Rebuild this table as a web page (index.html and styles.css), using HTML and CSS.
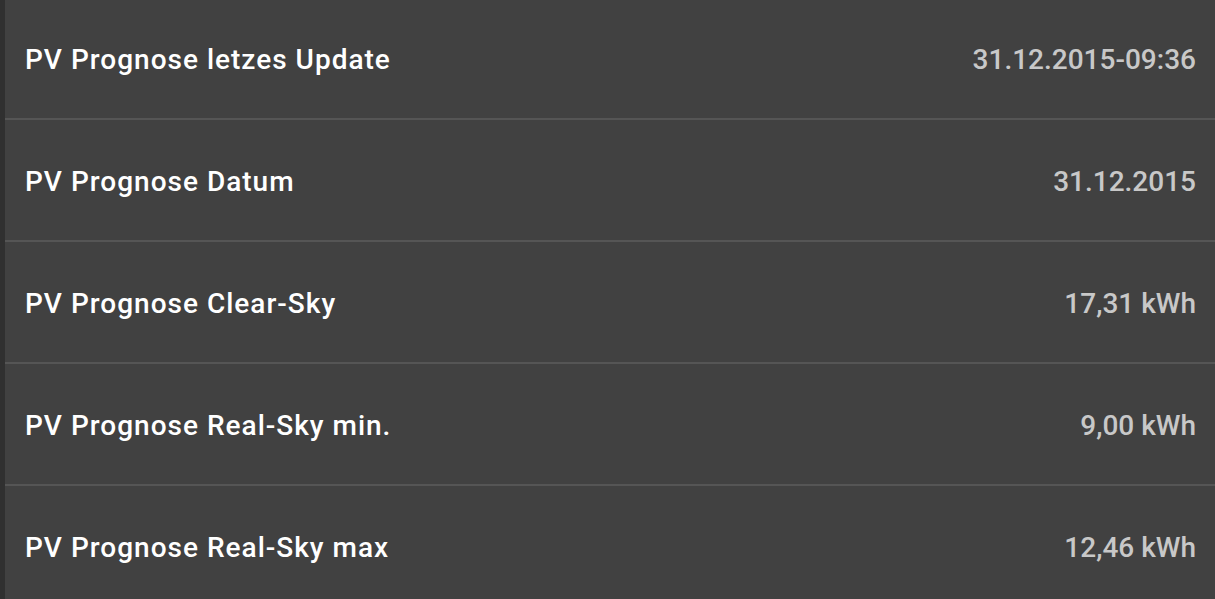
FILE: index.html
```html
<!DOCTYPE html>
<html>
<head>
<meta charset="utf-8">
<link rel="stylesheet" href="styles.css">
</head>
<body>
<div class="page">
  <div class="strip"></div>
  <ul class="list">
    <li class="row"><span class="label">PV Prognose letzes Update</span><span class="value">31.12.2015-09:36</span></li>
    <li class="row"><span class="label">PV Prognose Datum</span><span class="value">31.12.2015</span></li>
    <li class="row"><span class="label">PV Prognose Clear-Sky</span><span class="value">17,31 kWh</span></li>
    <li class="row"><span class="label">PV Prognose Real-Sky min.</span><span class="value">9,00 kWh</span></li>
    <li class="row"><span class="label">PV Prognose Real-Sky max</span><span class="value">12,46 kWh</span></li>
  </ul>
</div>
</body>
</html>
```
FILE: styles.css
```css
html, body {
  margin: 0;
  padding: 0;
  background: #414141;
  height: 100%;
  overflow: hidden;
}
.page {
  display: flex;
  height: 100%;
  font-family: Roboto, "Liberation Sans", sans-serif;
}
.strip {
  width: 5px;
  flex: none;
  background: #303030;
}
.list {
  list-style: none;
  margin: -2px 0 0 0;
  padding: 0;
  flex: 1;
}
.row {
  display: flex;
  align-items: center;
  justify-content: space-between;
  height: 120px;
  border-bottom: 2px solid #555555;
  padding: 2px 19px 0 20px;
  box-sizing: border-box;
  height: 122px;
}
.label {
  color: #ffffff;
  font-size: 28px;
  font-weight: 500;
  letter-spacing: 1px;
}
.value {
  color: #c8c8c8;
  font-size: 28px;
  font-weight: 500;
}
```
